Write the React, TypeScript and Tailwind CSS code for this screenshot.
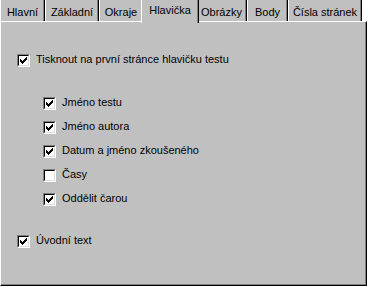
const tabs = [
  { label: "Hlavní", w: "w-[45px]" },
  { label: "Základní", w: "w-[54px]" },
  { label: "Okraje", w: "w-[44px]" },
  { label: "Hlavička", w: "w-[54px]", active: true },
  { label: "Obrázky", w: "w-[51px]" },
  { label: "Body", w: "w-[41px]" },
  { label: "Čísla stránek", w: "w-[74px]" },
];

function Check() {
  // classic 7x7 pixel tick, 3px tall per column
  const tops = [2, 3, 4, 3, 2, 1, 0];
  return (
    <svg width="7" height="7" viewBox="0 0 7 7" shapeRendering="crispEdges">
      {tops.map((t, i) => (
        <rect key={i} x={i} y={t} width="1" height="3" fill="#000" />
      ))}
    </svg>
  );
}

function Checkbox({ checked, label }: { checked: boolean; label: string }) {
  return (
    <div className="flex h-[13px] items-center">
      <div className="h-[13px] w-[13px] border border-t-[#808080] border-r-white border-b-white border-l-[#808080]">
        <div className="flex h-[11px] w-[11px] items-center justify-center border border-t-black border-r-[#dfdfdf] border-b-[#dfdfdf] border-l-black bg-white">
          {checked && <Check />}
        </div>
      </div>
      <span className="mb-[4px] ml-[6px] whitespace-nowrap">{label}</span>
    </div>
  );
}

export default function App() {
  return (
    <div
      className="h-[287px] w-[367px] overflow-hidden bg-white text-[11px] leading-[14px] text-black"
      style={{ fontFamily: '"Liberation Sans", Arial, sans-serif' }}
    >
      <div className="flex h-[21px]">
        {tabs.map((t) =>
          t.active ? (
            <div
              key={t.label}
              className={`relative z-10 -mx-[2px] h-[23px] ${t.w} box-content border-l border-l-white bg-[#c0c0c0] px-[1px] shadow-[inset_-1px_0_0_#808080,1px_0_0_#000]`}
            >
              <div className="pt-[3px] text-center">{t.label}</div>
            </div>
          ) : (
            <div
              key={t.label}
              className={`h-[21px] ${t.w} border-r border-l border-r-black border-l-white bg-[#c0c0c0] shadow-[inset_-1px_0_0_#808080]`}
            >
              <div className="pt-[5px] text-center">{t.label}</div>
            </div>
          ),
        )}
      </div>
      <div className="h-[265px] w-[367px] border border-t-white border-r-black border-b-black border-l-white bg-[#c0c0c0] pl-[16px] shadow-[inset_-1px_-1px_0_#808080]">
        <div className="mt-[32px]">
          <Checkbox checked label="Tisknout na první stránce hlavičku testu" />
        </div>
        <div className="mt-[30px] flex flex-col gap-[11px] pl-[26px]">
          <Checkbox checked label="Jméno testu" />
          <Checkbox checked label="Jméno autora" />
          <Checkbox checked label="Datum a jméno zkoušeného" />
          <Checkbox checked={false} label="Časy" />
          <Checkbox checked label="Oddělit čarou" />
        </div>
        <div className="mt-[29px]">
          <Checkbox checked label="Úvodní text" />
        </div>
      </div>
    </div>
  );
}
